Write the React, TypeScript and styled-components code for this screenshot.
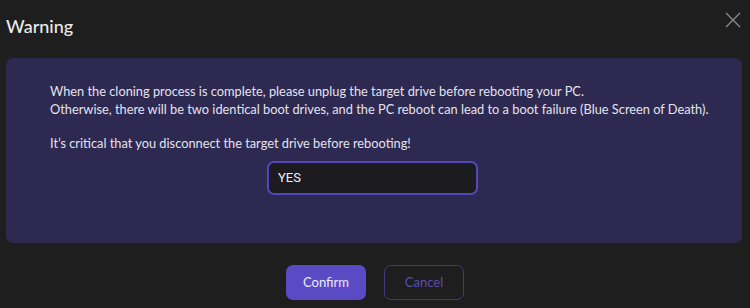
import styled, { createGlobalStyle } from "styled-components";

const Global = createGlobalStyle`
  html, body { margin: 0; padding: 0; background: #1e1e1e; }
  body { font-family: Lato, "Liberation Sans", sans-serif; }
`;

const Dialog = styled.div`
  width: 750px;
  height: 308px;
  box-sizing: border-box;
  background: #1e1e1e;
  display: flex;
  flex-direction: column;
  overflow: hidden;
`;

const Header = styled.div`
  height: 58px;
  display: flex;
  align-items: flex-start;
  justify-content: space-between;
  padding: 0 8px 0 6px;
  box-sizing: border-box;
`;

const Title = styled.h1`
  margin: 15px 0 0;
  font-family: Lato, sans-serif;
  font-size: 18px;
  font-weight: 500;
  color: #ececec;
`;

const CloseButton = styled.button`
  margin-top: 11px;
  width: 18px;
  height: 18px;
  padding: 0;
  border: none;
  background: transparent;
  cursor: pointer;
  display: flex;
`;

const Body = styled.div`
  margin: 0 8px 0 6px;
  padding: 25px 30px 48px 44px;
  background: #2d2950;
  border-radius: 7px;
  display: flex;
  flex-direction: column;
`;

const Message = styled.p`
  margin: 0;
  font-size: 12.8px;
  line-height: 17.5px;
  white-space: nowrap;
  color: #e4e2ee;
`;

const Spacer = styled.div`
  height: 17px;
`;

const Field = styled.div`
  margin: 8px 0 0 217px;
  width: 211px;
  height: 34px;
  box-sizing: border-box;
  border: 2px solid #5646b8;
  border-radius: 7px;
  background: #1c1b1f;
  display: flex;
  align-items: center;
  padding: 0 9px;
  font-family: Roboto, sans-serif;
  font-size: 13px;
  color: #f0f0f0;
`;

const Footer = styled.div`
  display: flex;
  justify-content: center;
  gap: 18px;
  padding: 22px 0 0;
`;

const Button = styled.button<{ $primary?: boolean }>`
  width: 80px;
  height: 35px;
  box-sizing: border-box;
  border-radius: 7px;
  font-family: Lato, sans-serif;
  font-size: 13px;
  cursor: pointer;
  background: ${({ $primary }) => ($primary ? "#5a4ac4" : "transparent")};
  color: ${({ $primary }) => ($primary ? "#ecebf8" : "#5b4db5")};
  border: ${({ $primary }) => ($primary ? "none" : "1.5px solid #43397e")};
`;

export default function App() {
  return (
    <>
      <Global />
      <Dialog>
        <Header>
          <Title>Warning</Title>
          <CloseButton aria-label="Close">
            <svg width="18" height="18" viewBox="0 0 18 18">
              <path d="M2 2 L16 16 M16 2 L2 16" stroke="#8c8c8c" strokeWidth="1.3" />
            </svg>
          </CloseButton>
        </Header>
        <Body>
          <Message>
            When the cloning process is complete, please unplug the target drive before rebooting your PC.
            <br />
            Otherwise, there will be two identical boot drives, and the PC reboot can lead to a boot failure (Blue
            Screen of Death).
          </Message>
          <Spacer />
          <Message>It’s critical that you disconnect the target drive before rebooting!</Message>
          <Field>YES</Field>
        </Body>
        <Footer>
          <Button $primary>Confirm</Button>
          <Button>Cancel</Button>
        </Footer>
      </Dialog>
    </>
  );
}
